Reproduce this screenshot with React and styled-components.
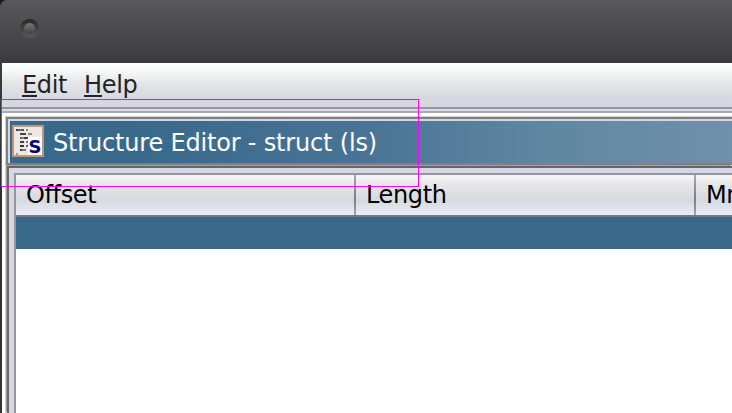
import React from "react";
import styled, { createGlobalStyle } from "styled-components";

const Global = createGlobalStyle`
  * { box-sizing: border-box; }
  body { margin: 0; background: #fff; overflow: hidden; font: 24px/28px "DejaVu Sans", sans-serif; }
`;

const Window = styled.div`
  position: relative;
  width: 732px;
  height: 413px;
  overflow: hidden;
  background: #1a1a1a;
`;

const Chrome = styled.div`
  height: 413px;
  display: flex;
  flex-direction: column;
  padding-left: 2px;
  border-top-left-radius: 8px;
  background: linear-gradient(#555 0, #3c3b3d 63px, #2e2e30 200px, #343436 413px);
`;

const TitleBar = styled.header`
  flex: none;
  height: 63px;
  margin-left: -2px;
  padding: 18px 0 0 20px;
  border-top: 1px solid #5c5b5d;
  border-top-left-radius: 8px;
  background: linear-gradient(#585759, #3b3a3c);
`;

const WindowButton = styled.div`
  width: 19px;
  height: 19px;
  padding: 4px;
  border-radius: 50%;
  background: linear-gradient(#272727, #5c5c5c);
  &::after {
    content: "";
    display: block;
    height: 11px;
    border-radius: 50%;
    background: linear-gradient(#777, #414141);
  }
`;

const MenuBar = styled.nav`
  flex: none;
  height: 44px;
  padding: 8px 0 0 20px;
  display: flex;
  gap: 17px;
  color: #222327;
  letter-spacing: -0.35px;
  background: linear-gradient(#fff 0, #f4f5f5 10px, #e3e4e7 21px, #d5d8e0 36px, #d5d8e0 44px);
`;

const MenuItem = styled.div`
  white-space: nowrap;
`;

const Mnemonic = styled.span`
  display: inline-block;
  height: 26px;
  border-bottom: 2px solid #222327;
`;

const Rule = styled.div`
  flex: none;
  height: 6px;
  border-top: 2px solid #9396a2;
  border-bottom: 2px solid #a6a9b5;
  background: #d8dbe3;
`;

const Desktop = styled.main`
  flex: 1;
  display: flex;
  padding: 3px 0 0 3px;
  background: #fff;
`;

const Frame = styled.section`
  flex: 1;
  min-width: 0;
  display: flex;
  flex-direction: column;
  border-left: 1px solid #cfd0d4;
  border-top: 1px solid #cfd0d4;
`;

const Caption = styled.div`
  flex: none;
  height: 48px;
  display: flex;
  align-items: center;
  gap: 9px;
  padding: 0 0 0 2px;
  border: solid #808080;
  border-width: 2px 0 2px 2px;
  color: #fff;
  background: linear-gradient(90deg, #38698a 0, #38698a 120px, #487395 350px, #5f87a0 535px, #7190aa 726px);
  box-shadow: inset 2px 2px #d5d8df;
`;

const Icon = styled.svg`
  flex: none;
  width: 32px;
  height: 32px;
  margin: 0 0 0 2px;
`;

const CaptionText = styled.span`
  padding-top: 4px;
  white-space: nowrap;
  letter-spacing: -0.18px;
`;

const Panel = styled.div`
  flex: 1;
  display: flex;
  margin-top: 1px;
  margin-left: 1px;
  padding: 5px 0 0 5px;
  border-left: 2px solid #66676a;
  border-top: 2px solid #66676a;
  background: #d5d8e0;
  box-shadow: -1px -1px #a0a29c;
`;

const Table = styled.div`
  flex: 1;
  min-width: 0;
  border-left: 2px solid #9396a2;
  border-top: 2px solid #9396a2;
  background: #fff;
`;

const HeaderRow = styled.div`
  display: grid;
  grid-template-columns: 340px 340px 340px;
  height: 42px;
  border-bottom: 2px solid #777980;
  background: linear-gradient(#f6f6f7, #e3e4e7 30%, #d6d9df 64%, #e9edf7);
`;

const HeaderCell = styled.div`
  padding: 6px 0 0 10px;
  color: #000;
  letter-spacing: -0.38px;
  border-right: 2px solid;
  border-image: linear-gradient(#a5a8ad, #7b7f84 60%, #a4a7af) 1;
  border-image-width: 0 2px 0 0;
`;

const SelectedRow = styled.div`
  height: 32px;
  background: #38698a;
`;

const Marquee = styled.div`
  position: absolute;
  left: 1px;
  top: 99px;
  width: 418px;
  height: 88px;
  border: 1px solid #ff00ff;
`;

const marks = [
  [4, 4, 2, "#444"], [6, 4, 4, "#666"], [10, 4, 2, "#555"], [14, 4, 2, "#888"],
  [8, 8, 6, "#444"], [16, 8, 4, "#888"],
  [8, 12, 2, "#666"], [10, 12, 2, "#888"], [12, 12, 4, "#444"],
  [8, 16, 4, "#444"], [14, 16, 2, "#777"],
  [8, 20, 4, "#333"], [14, 20, 2, "#666"],
  [8, 24, 2, "#444"], [10, 24, 4, "#777"],
  [4, 28, 2, "#999"],
];

function StructureIcon() {
  return (
    <Icon viewBox="0 0 32 32" shapeRendering="crispEdges">
      <rect width="32" height="32" fill="#bf977c" />
      <rect x="2" y="2" width="28" height="28" fill="#eee7e2" />
      {marks.map(([x, y, w, fill]) => (
        <rect key={`${x}-${y}`} x={x} y={y} width={w} height="2" fill={fill} />
      ))}
      <rect x="16" y="12" width="14" height="18" fill="#fff" />
      <text x="23" y="28" textAnchor="middle" fontFamily="DejaVu Sans" fontWeight="700" fontSize="18" fill="#000080">S</text>
    </Icon>
  );
}

export default function App() {
  return (
    <Window>
      <Global />
      <Chrome>
        <TitleBar><WindowButton /></TitleBar>
        <MenuBar>
          <MenuItem><Mnemonic>E</Mnemonic>dit</MenuItem>
          <MenuItem><Mnemonic>H</Mnemonic>elp</MenuItem>
        </MenuBar>
        <Rule />
        <Desktop>
          <Frame>
            <Caption>
              <StructureIcon />
              <CaptionText>Structure Editor - struct (ls)</CaptionText>
            </Caption>
            <Panel>
              <Table>
                <HeaderRow>
                  <HeaderCell>Offset</HeaderCell>
                  <HeaderCell>Length</HeaderCell>
                  <HeaderCell>Mnemonic</HeaderCell>
                </HeaderRow>
                <SelectedRow />
              </Table>
            </Panel>
          </Frame>
        </Desktop>
      </Chrome>
      <Marquee />
    </Window>
  );
}
